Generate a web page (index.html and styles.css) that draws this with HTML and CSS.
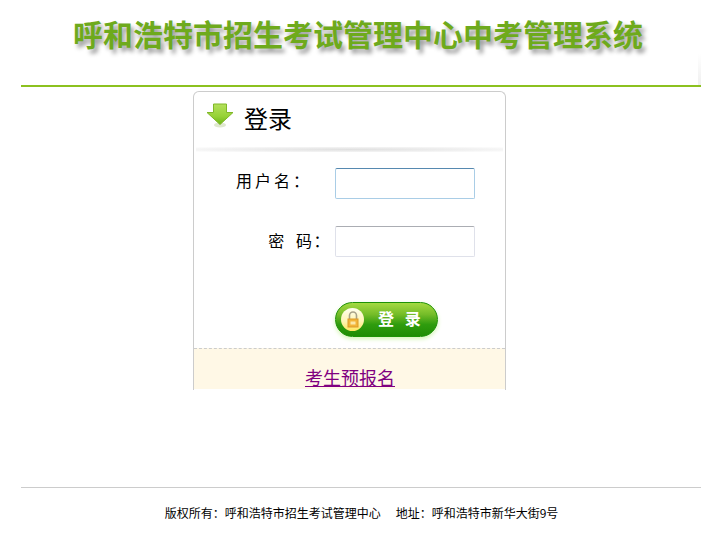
FILE: index.html
```html
<!DOCTYPE html>
<html lang="zh-CN">
<head>
    <meta charset="UTF-8">
    <title>呼和浩特市招生考试管理中心中考管理系统</title>
    <link rel="stylesheet" href="styles.css">
</head>
<body>
    <div class="wrap">
        <div class="header">
            <h1 class="site-title">呼和浩特市招生考试管理中心中考管理系统</h1>
        </div>
        <div class="login-box">
            <div class="login-head">
                <svg class="login-arrow" width="28" height="25" viewBox="0 0 28 25">
                    <defs>
                        <linearGradient id="arrowFill" x1="0" y1="0" x2="0" y2="1">
                            <stop offset="0" stop-color="#b4e05c"/>
                            <stop offset="0.6" stop-color="#96d236"/>
                            <stop offset="1" stop-color="#6cb418"/>
                        </linearGradient>
                    </defs>
                    <ellipse cx="14" cy="22" rx="6" ry="2.5" fill="#dfe8cf"/>
                    <path d="M7.5 1H20.500V9.500H27L14 21.500L1 9.500H7.500Z" fill="url(#arrowFill)" stroke="#80b828" stroke-width="1"/>
                </svg>
                <h2 class="login-title">登录</h2>
            </div>
            <div class="head-shadow"></div>
            <form class="login-form">
                <div class="form-row">
                    <label class="form-label label-user">用户名：</label>
                    <input class="form-input input-focus" type="text">
                </div>
                <div class="form-row">
                    <label class="form-label label-pass">密&nbsp;&nbsp;码：</label>
                    <input class="form-input" type="password">
                </div>
                <div class="form-submit">
                    <a class="login-button" href="#">
                        <span class="lock-badge">
                            <svg width="14" height="17" viewBox="0 0 14 17">
                                <path d="M3.500 8V4.500a3.500 3.500 0 0 1 7 0V8" fill="none" stroke="#a8a288" stroke-width="1.600"/>
                                <rect x="2" y="8" width="10" height="8" fill="#f2b438" stroke="#dc9a28" stroke-width="1"/>
                                <rect x="4.500" y="10.500" width="5" height="3" fill="#fbe7a8"/>
                            </svg>
                        </span>
                        <span class="button-text">登 录</span>
                    </a>
                </div>
            </form>
            <div class="signup">
                <a class="signup-link" href="#">考生预报名</a>
            </div>
        </div>
        <div class="footer">
            版权所有：呼和浩特市招生考试管理中心<span class="footer-gap">地址：呼和浩特市新华大街9号</span>
        </div>
    </div>
</body>
</html>
```

FILE: styles.css
```css
body {
    margin: 0;
    background: #fff;
    font-family: "Noto Sans CJK SC", "Liberation Sans", sans-serif;
    color: #000;
}
.wrap {
    width: 680px;
    margin-left: 21px;
}
.header {
    height: 85px;
    border-bottom: 2px solid #8cc11f;
    background: linear-gradient(to bottom, #fff, #efefef) right bottom / 3px 32px no-repeat;
}
.site-title {
    margin: 0;
    padding: 13px 0 0 52px;
    font-size: 30px;
    line-height: 40px;
    font-weight: 700;
    white-space: nowrap;
    color: #6eaa1c;
    text-shadow: 3px 4px 4px #999;
}
.login-box {
    width: 311px;
    height: 298px;
    margin: 4px 0 0 172px;
    border: 1px solid #ccc;
    border-bottom: 0;
    border-radius: 6px 6px 0 0;
    overflow: hidden;
}
.login-head {
    display: flex;
    height: 55px;
    padding: 11px 0 0 12px;
    box-sizing: border-box;
}
.login-arrow {
    flex: none;
}
.login-title {
    margin: -3px 0 0 10px;
    font-size: 24px;
    line-height: 36px;
    font-weight: 400;
}
.head-shadow {
    height: 5px;
    margin: 0 2px;
    background: radial-gradient(ellipse at center, #e0e0e0 0%, #f0f0f0 55%, #fff 100%);
}
.login-form {
    padding-top: 16px;
}
.form-row {
    display: flex;
    align-items: center;
    height: 31px;
    margin-bottom: 27px;
}
.form-label {
    flex: none;
    box-sizing: border-box;
    width: 141px;
    font-size: 16px;
    text-align: right;
    white-space: nowrap;
}
.label-user {
    letter-spacing: 3px;
    padding: 0 23px 8px 0;
}
.label-pass {
    letter-spacing: 1.500px;
    padding: 0 4px 4px 0;
}
.form-input {
    width: 140px;
    height: 31px;
    margin: 0;
    padding: 0 4px;
    box-sizing: border-box;
    border: 1px solid #dfe1ea;
    border-top-color: #abadb3;
    border-radius: 2px;
    background: #fff;
    outline: 0;
}
.input-focus {
    border-color: #a9cde6;
    border-top-color: #5689b0;
}
.form-submit {
    padding: 18px 0 0 141px;
    height: 46px;
}
.login-button {
    display: flex;
    align-items: center;
    width: 103px;
    height: 35px;
    box-sizing: border-box;
    padding-left: 5px;
    border: 1px solid #1e9206;
    border-radius: 18px;
    background: linear-gradient(to bottom, #a4da40 0%, #74bc28 35%, #2f9c0e 65%, #1f8c04 100%);
    box-shadow: 0 2px 4px #d4f5b4;
    text-decoration: none;
}
.lock-badge {
    display: flex;
    align-items: center;
    justify-content: center;
    width: 23px;
    height: 23px;
    border-radius: 50%;
    background: linear-gradient(to bottom, #fefef0 0%, #fff4b0 60%, #ffe65c 100%);
}
.button-text {
    margin: -4px 0 0 14px;
    font-size: 16px;
    font-weight: 700;
    color: #fff;
    word-spacing: 7px;
    white-space: pre;
}
.signup {
    height: 41px;
    padding: 17px 0 0 1px;
    box-sizing: border-box;
    border-top: 1px dashed #ccc;
    background: #fff8e6;
    text-align: center;
    font-size: 18px;
    line-height: 22px;
}
.signup-link {
    color: #800080;
}
.footer {
    margin-top: 97px;
    padding: 16px 0 0 1px;
    border-top: 1px solid #ccc;
    font-size: 12px;
    line-height: 18px;
    text-align: center;
}
.footer-gap {
    margin-left: 15px;
}
```
